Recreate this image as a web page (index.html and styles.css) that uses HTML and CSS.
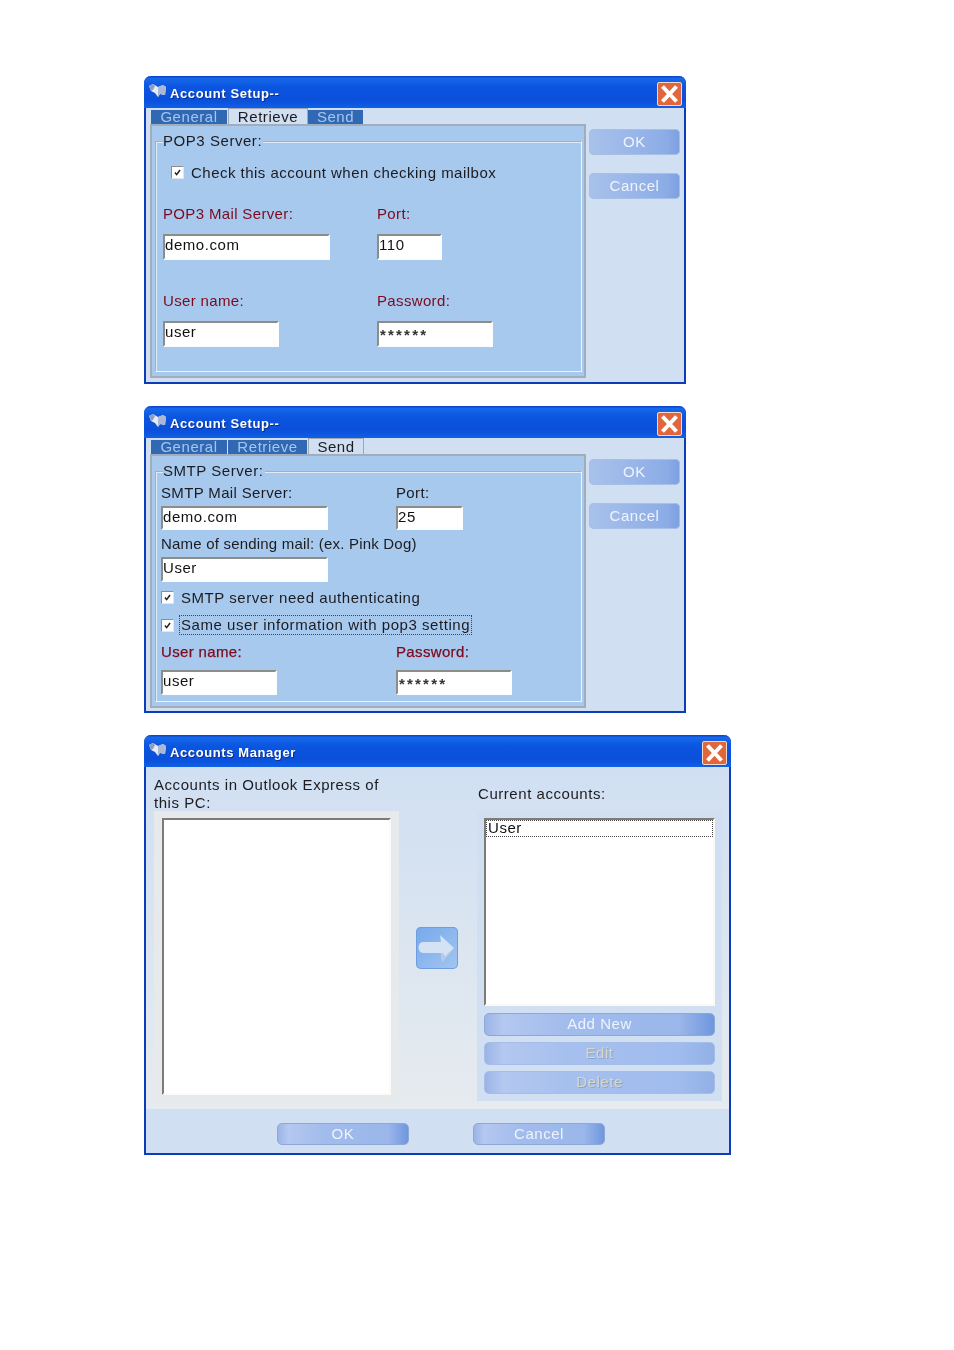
FILE: index.html
```html
<!DOCTYPE html>
<html lang="en">
<head>
  <meta charset="UTF-8">
  <title>Account Setup</title>
  <link rel="stylesheet" href="styles.css">
</head>
<body>
  <svg class="defs" width="0" height="0">
    <symbol id="book" viewBox="0 0 18 14">
      <path d="M0 2 L4 0 L9 3 L14 1 L17 3 L16 11 L11 10 L9 13 L6 9 L2 7 Z" fill="#e6ecf6"/>
      <path d="M9 3 L14 1 L17 3 L16 11 L11 10 L9 13 Z" fill="#aab8d4"/>
      <path d="M0 2 L4 0 L6 2 L4 6 L2 7 Z" fill="#8e9cc0"/>
    </symbol>
    <symbol id="close" viewBox="0 0 25 24">
      <rect x=".5" y=".5" width="24" height="23" rx="1.5" fill="#e2663c" stroke="#f4d8c8"/>
      <path d="M5.5 4.5 L19.5 19.5 M19.5 4.5 L5.5 19.5" stroke="#fff" stroke-width="4"/>
    </symbol>
    <symbol id="tick" viewBox="0 0 13 13">
      <path d="M3.5 6.5 L5.5 9 L9.5 3.5" fill="none" stroke="#222" stroke-width="1.8"/>
    </symbol>
  </svg>

  <div class="window win-small">
    <div class="titlebar">
      <svg class="book"><use href="#book"/></svg>
      <span class="title">Account Setup--</span>
      <svg class="close"><use href="#close"/></svg>
    </div>
    <div class="dialog">
      <div class="left">
        <div class="tabs">
          <div class="tab tab-general">General</div>
          <div class="tab tab-retrieve active">Retrieve</div>
          <div class="tab tab-send">Send</div>
        </div>
        <div class="panel">
          <div class="group pop">
            <div class="legend">POP3 Server:</div>
            <div class="check pop-check">
              <span class="box"><svg><use href="#tick"/></svg></span>
              <span>Check this account when checking mailbox</span>
            </div>
            <div class="fields">
              <div class="field">
                <div class="label red">POP3 Mail Server:</div>
                <div class="input w-167">demo.com</div>
              </div>
              <div class="field">
                <div class="label red">Port:</div>
                <div class="input w-65">110</div>
              </div>
              <div class="field">
                <div class="label red">User name:</div>
                <div class="input w-116">user</div>
              </div>
              <div class="field">
                <div class="label red">Password:</div>
                <div class="input w-116 stars">******</div>
              </div>
            </div>
          </div>
        </div>
      </div>
      <div class="side">
        <div class="btn">OK</div>
        <div class="btn">Cancel</div>
      </div>
    </div>
  </div>

  <div class="window win-small win-send">
    <div class="titlebar">
      <svg class="book"><use href="#book"/></svg>
      <span class="title">Account Setup--</span>
      <svg class="close"><use href="#close"/></svg>
    </div>
    <div class="dialog">
      <div class="left">
        <div class="tabs">
          <div class="tab tab-general">General</div>
          <div class="tab tab-retrieve">Retrieve</div>
          <div class="tab tab-send active">Send</div>
        </div>
        <div class="panel">
          <div class="group smtp">
            <div class="legend">SMTP Server:</div>
            <div class="row-two">
              <div class="field tight">
                <div class="label">SMTP Mail Server:</div>
                <div class="input short w-167">demo.com</div>
              </div>
              <div class="field tight">
                <div class="label">Port:</div>
                <div class="input short w-67">25</div>
              </div>
            </div>
            <div class="field tight name-field">
              <div class="label name-label">Name of sending mail: (ex. Pink Dog)</div>
              <div class="input short w-167 roomy">User</div>
            </div>
            <div class="check auth-check">
              <span class="box"><svg><use href="#tick"/></svg></span>
              <span>SMTP server need authenticating</span>
            </div>
            <div class="check same-check">
              <span class="box"><svg><use href="#tick"/></svg></span>
              <span class="focus">Same user information with pop3 setting</span>
            </div>
            <div class="row-two user-row">
              <div class="field mid">
                <div class="label red strong">User name:</div>
                <div class="input w-116 send-input">user</div>
              </div>
              <div class="field mid">
                <div class="label red strong">Password:</div>
                <div class="input w-116 send-input stars">******</div>
              </div>
            </div>
          </div>
        </div>
      </div>
      <div class="side">
        <div class="btn">OK</div>
        <div class="btn">Cancel</div>
      </div>
    </div>
  </div>

  <div class="window win-large">
    <div class="titlebar">
      <svg class="book"><use href="#book"/></svg>
      <span class="title">Accounts Manager</span>
      <svg class="close"><use href="#close"/></svg>
    </div>
    <div class="manager">
      <div class="col">
        <div class="col-head">Accounts in Outlook Express of<br>this PC:</div>
        <div class="well">
          <div class="list list-left"></div>
        </div>
      </div>
      <div class="middle">
        <div class="arrow">
          <svg viewBox="0 0 42 42" width="42" height="42">
            <path d="M7 15 H25 L24 8 L38 21 L26 35 L25 26 H7 C1 26 1 15 7 15 Z" fill="#d3e2f4"/>
            <path d="M38 21 L26 35 L25 26 H27 L29 29 Z" fill="#b4cbe8"/>
          </svg>
        </div>
      </div>
      <div class="col">
        <div class="col-head right-head">Current accounts:</div>
        <div class="well">
          <div class="list list-right">
            <div class="list-item">User</div>
          </div>
          <div class="wide-btn">Add New</div>
          <div class="wide-btn off">Edit</div>
          <div class="wide-btn off">Delete</div>
        </div>
      </div>
    </div>
    <div class="footer">
      <div class="foot-btn">OK</div>
      <div class="foot-btn">Cancel</div>
    </div>
  </div>
</body>
</html>
```

FILE: styles.css
```css
html,body{
  margin: 0;
  padding: 0;
}
body{
  width: 954px;
  height: 1350px;
  box-sizing: border-box;
  padding: 76px 0 0 144px;
  background-color: #fff;
  font-family: "Liberation Sans", Arial, sans-serif;
  font-size: 15px;
  letter-spacing: .55px;
  color: #1c1c20;
  overflow: hidden;
}
.defs{
  position: absolute;
}
.window{
  box-sizing: border-box;
  border: 2px solid #0c3cb8;
  border-top: 0;
  border-radius: 7px 7px 0 0;
  background-color: #d0dff2;
  filter: blur(.35px);
}
.win-small{
  width: 542px;
  height: 308px;
  margin-bottom: 22px;
}
.win-send{
  height: 307px;
}
.win-large{
  width: 587px;
  height: 420px;
}
.titlebar{
  display: flex;
  align-items: center;
  height: 32px;
  margin: 0 -2px;
  padding: 3px 3px 0 5px;
  box-sizing: border-box;
  border-radius: 7px 7px 0 0;
  background: linear-gradient(#0a3fc4 0, #1668ea 8%, #0b55e0 35%, #0a4fda 75%, #1060e6 100%);
}
.book{
  width: 18px;
  height: 14px;
  margin-top: -6px;
}
.title{
  flex: 1;
  margin-left: 3px;
  color: #fff;
  font-size: 13px;
  font-weight: bold;
  letter-spacing: .6px;
  text-shadow: 1px 1px 0 #0a2f90;
}
.close{
  width: 25px;
  height: 24px;
  margin-right: 1px;
}
.dialog{
  display: flex;
}
.left{
  width: 436px;
  margin-left: 4px;
  padding-top: 2px;
}
.tabs{
  display: flex;
  align-items: flex-end;
  height: 14px;
  padding-left: 1px;
}
.tab{
  box-sizing: border-box;
  height: 14px;
  line-height: 14px;
  text-align: center;
  background-color: #3068b4;
  color: #a4c6ee;
  border-right: 1px solid #d0dff2;
}
.tab.active{
  height: 16px;
  line-height: 15px;
  background-color: #d0dff2;
  color: #1c1c20;
  border: 1px solid #a0a8b4;
  border-bottom: 0;
}
.tab-general{
  width: 77px;
}
.tab-retrieve{
  width: 80px;
}
.tab-send{
  width: 56px;
}
.panel{
  box-sizing: border-box;
  height: 254px;
  padding: 15px 2px 0 3px;
  background-color: #a8c9ee;
  border: 2px solid #a3adb9;
}
.group{
  position: relative;
  box-sizing: border-box;
  height: 231px;
  border: 1px solid #eef4fa;
  border-top-color: #a4aebc;
  border-left-color: #a4aebc;
  box-shadow: inset 1px 1px 0 #e2ebf5;
}
.pop{
  padding: 22px 0 0 7px;
}
.smtp{
  padding: 13px 0 0 5px;
}
.legend{
  position: absolute;
  top: -9px;
  left: 7px;
  padding-right: 1px;
  line-height: 16px;
  background-color: #a8c9ee;
}
.check{
  display: flex;
  align-items: center;
  gap: 8px;
  height: 16px;
}
.box{
  display: block;
  box-sizing: border-box;
  width: 13px;
  height: 13px;
  background-color: #fff;
  border: 1px solid #8a8f98;
  border-right-color: #dfe6ee;
  border-bottom-color: #dfe6ee;
}
.box svg{
  display: block;
  width: 11px;
  height: 11px;
}
.pop-check{
  gap: 7px;
  margin-left: 8px;
  letter-spacing: .48px;
}
.auth-check{
  margin-top: 7px;
  gap: 7px;
}
.same-check{
  height: 20px;
  margin-top: 10px;
  gap: 6px;
}
.focus{
  padding: 0 1px;
  line-height: 18px;
  outline: 1px dotted #444;
}
.fields{
  display: grid;
  grid-template-columns: 214px 1fr;
  row-gap: 33px;
  margin-top: 26px;
}
.field{
  display: flex;
  flex-direction: column;
  align-items: flex-start;
  gap: 12px;
}
.field.tight{
  gap: 5px;
}
.field.mid{
  gap: 10px;
}
.row-two{
  display: grid;
  grid-template-columns: 235px 1fr;
}
.name-field{
  margin-top: 6px;
}
.user-row{
  margin-top: 9px;
}
.label{
  line-height: 16px;
  letter-spacing: .35px;
  white-space: nowrap;
}
.name-label{
  letter-spacing: .2px;
}
.red{
  color: #7c0a1e;
}
.strong{
  -webkit-text-stroke: .25px #7c0a1e;
}
.input{
  box-sizing: border-box;
  height: 26px;
  line-height: 18px;
  background-color: #fff;
  color: #111;
  border: 2px solid #fbfdff;
  border-top-color: #8c8c88;
  border-left-color: #8c8c88;
}
.input.short{
  height: 24px;
  line-height: 17px;
}
.input.roomy{
  height: 25px;
  line-height: 18px;
}
.send-input{
  height: 25px;
  line-height: 18px;
}
.input.stars{
  padding-left: 1px;
  line-height: 24px;
  font-size: 15px;
  font-weight: bold;
  letter-spacing: 2.2px;
  color: #333;
}
.w-167{
  width: 167px;
}
.w-116{
  width: 116px;
}
.w-65{
  width: 65px;
}
.w-67{
  width: 67px;
}
.side{
  display: flex;
  flex-direction: column;
  gap: 18px;
  margin-left: 3px;
  padding-top: 21px;
}
.btn{
  width: 91px;
  height: 26px;
  line-height: 25px;
  text-align: center;
  border-radius: 5px;
  color: #eef4fc;
  background: linear-gradient(90deg, #a8c2ea, #9cb8ea 40%, #8cace6 85%, #7c9fe0);
  box-shadow: inset 0 0 0 1px #a6bfe4;
}
.manager{
  display: flex;
  height: 342px;
  box-sizing: border-box;
  padding: 8px 0 8px 8px;
  background: linear-gradient(#d0dff2, #e6ebef);
}
.col{
  display: flex;
  flex-direction: column;
  justify-content: flex-end;
  width: 245px;
}
.col-head{
  margin-bottom: -1px;
  line-height: 18px;
}
.right-head{
  padding-left: 1px;
  margin-bottom: 9px;
  line-height: 17px;
}
.well{
  height: 290px;
  box-sizing: border-box;
  padding: 7px 7px 0 8px;
  background-color: #e6eaec;
}
.col:last-child .well{
  padding-left: 7px;
  background-color: #d0dff2;
}
.list{
  box-sizing: border-box;
  background-color: #fff;
  border: 2px solid #fbfaf4;
  border-top-color: #7c7c74;
  border-left-color: #7c7c74;
}
.list-left{
  width: 229px;
  height: 277px;
}
.list-right{
  width: 231px;
  height: 188px;
  margin-bottom: 7px;
  padding: 0;
}
.list-item{
  height: 17px;
  line-height: 15px;
  padding-left: 2px;
  outline: 1px dotted #444;
  outline-offset: -1px;
  color: #111;
}
.middle{
  display: flex;
  align-items: flex-start;
  justify-content: center;
  width: 76px;
  padding: 152px 2px 0 0;
}
.arrow{
  width: 42px;
  height: 42px;
  border-radius: 5px;
  background: linear-gradient(135deg, #76a8ec, #a4c6f0);
  box-shadow: inset 0 0 0 1px #6f9ee0;
}
.arrow svg{
  display: block;
}
.wide-btn,
.foot-btn{
  box-sizing: border-box;
  text-align: center;
  color: #eef4fc;
  border-radius: 5px;
  background: linear-gradient(90deg, #9cb4e6, #b4c8f0 8%, #a2bcec 35%, #9ab6ea 85%, #6f97de);
  border: 1px solid #8ea8d6;
}
.wide-btn{
  width: 231px;
  height: 23px;
  margin-bottom: 6px;
  line-height: 20px;
}
.wide-btn.off{
  color: #d6d6cc;
  text-shadow: 1px 1px 0 #8ea4c8;
  border-color: #a6bde8;
  background: linear-gradient(90deg, #9cb4e6, #b4c8f0 8%, #a6c0ee 35%, #a0bcee 85%, #92b0e6);
}
.footer{
  display: flex;
  gap: 64px;
  padding: 14px 0 0 131px;
}
.foot-btn{
  width: 132px;
  height: 22px;
  line-height: 20px;
}
```
